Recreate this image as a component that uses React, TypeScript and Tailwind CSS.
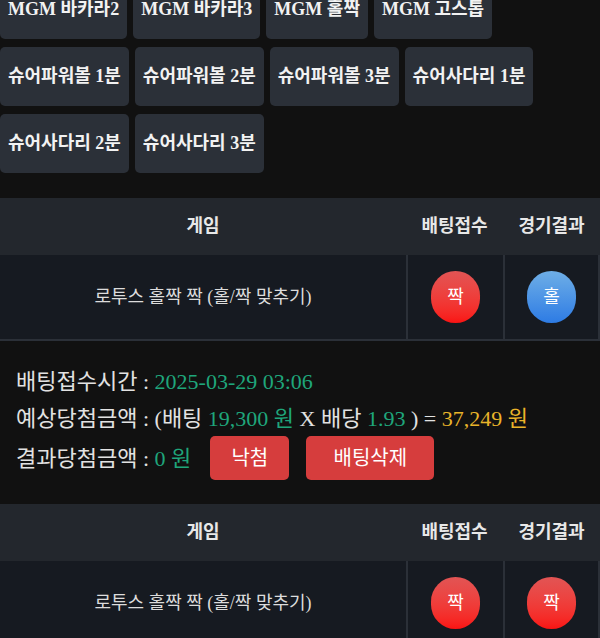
import React from 'react';

const games = [
    'MGM 바카라2',
    'MGM 바카라3',
    'MGM 홀짝',
    'MGM 고스톱',
    '슈어파워볼 1분',
    '슈어파워볼 2분',
    '슈어파워볼 3분',
    '슈어사다리 1분',
    '슈어사다리 2분',
    '슈어사다리 3분',
];

type Side = '홀' | '짝';

const Ball: React.FC<{ side: Side }> = ({ side }) => (
    <div
        className={`w-[49px] h-[52px] rounded-full flex items-center justify-center text-[18px] text-white ${
            side === '짝'
                ? 'bg-gradient-to-b from-[#e25454] to-[#fa1212]'
                : 'bg-gradient-to-b from-[#6eaee6] to-[#2d7be4]'
        }`}
    >
        {side}
    </div>
);

const BetTable: React.FC<{ pick: Side; result: Side }> = ({ pick, result }) => (
    <div>
        {/* Header */}
        <div className="flex h-[57px] bg-[#23272d] text-[18px] font-bold text-[#e8e8e8]">
            <div className="w-[406px] flex items-center justify-center">게임</div>
            <div className="w-[97px] flex items-center justify-center">배팅접수</div>
            <div className="w-[97px] flex items-center justify-center">경기결과</div>
        </div>

        {/* Row */}
        <div className="flex h-[86px] bg-[#161a21] text-[18px] text-[#dcdcdc]">
            <div className="w-[406px] flex items-center justify-center border-b-2 border-[#2b3038]">
                로투스 홀짝 짝 (홀/짝 맞추기)
            </div>
            <div className="w-[97px] flex items-center justify-center border-l-2 border-b-2 border-[#2b3038]">
                <Ball side={pick} />
            </div>
            <div className="w-[97px] flex items-center justify-center border-x-2 border-b-2 border-[#2b3038]">
                <Ball side={result} />
            </div>
        </div>
    </div>
);

export default function App() {
    return (
        <div className="min-h-screen w-[600px] overflow-hidden bg-[#111111] font-['Liberation_Serif','Noto_Sans_CJK_KR',serif]">
            {/* Game buttons */}
            <div className="-mt-[20px] flex flex-wrap gap-x-[6px] gap-y-[8px]">
                {games.map((g) => (
                    <button
                        key={g}
                        className="h-[59px] px-2 rounded-[5px] bg-[#2b3038] text-[18px] font-bold text-[#f2f2f2]"
                    >
                        {g}
                    </button>
                ))}
            </div>

            <div className="mt-[25px]">
                <BetTable pick="짝" result="홀" />
            </div>

            {/* Bet info */}
            <div className="px-4 pt-[21px] pb-[24px] text-[22px] text-[#e2e2e2]">
                <div className="h-[38px] flex items-center">
                    배팅접수시간 :&nbsp;<span className="text-[#1fa67b]">2025-03-29 03:06</span>
                </div>
                <div className="h-[36px] flex items-center whitespace-pre">
                    예상당첨금액 : (배팅 <span className="text-[#1fa67b]">19,300 원</span> X 배당{' '}
                    <span className="text-[#1fa67b]">1.93</span> ) ={' '}
                    <span className="text-[#e9b42a]">37,249 원</span>
                </div>
                <div className="h-[44px] flex items-center">
                    결과당첨금액 :&nbsp;<span className="text-[#1fa67b]">0 원</span>
                    <button className="ml-[19px] w-[79px] h-[44px] rounded-[5px] bg-[#d63d3d] text-[20px] text-white">
                        낙첨
                    </button>
                    <button className="ml-[17px] w-[128px] h-[44px] rounded-[5px] bg-[#d63d3d] text-[20px] text-white">
                        배팅삭제
                    </button>
                </div>
            </div>

            <BetTable pick="짝" result="짝" />
        </div>
    );
}
